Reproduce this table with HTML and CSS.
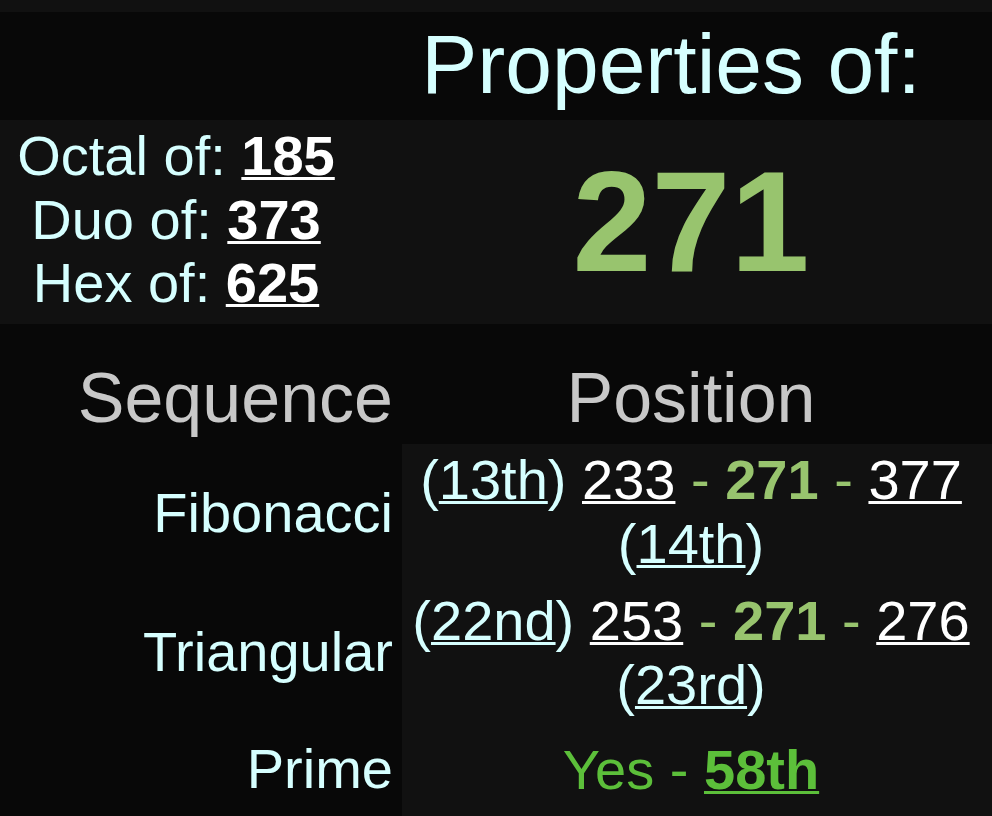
FILE: index.html
```html
<!DOCTYPE html>
<html lang="en">
<head>
<meta charset="utf-8">
<title>Properties of 271</title>
<link rel="stylesheet" href="styles.css">
</head>
<body>
<main class="props">
  <div class="strip"></div>
  <header class="title-row">
    <h1 class="title">Properties of:</h1>
  </header>
  <section class="number-row">
    <div class="bases">
      <div class="base-line">Octal of: <a class="base-num" href="#">185</a></div>
      <div class="base-line">Duo of: <a class="base-num" href="#">373</a></div>
      <div class="base-line">Hex of: <a class="base-num" href="#">625</a></div>
    </div>
    <div class="number">271</div>
  </section>
  <section class="seq">
    <div class="seq-head seq-head-label">Sequence</div>
    <div class="seq-head seq-head-value">Position</div>

    <div class="seq-label seq-label-fib">Fibonacci</div>
    <div class="seq-value seq-value-fib">
      <div class="seq-line">(<a class="pos-link" href="#">13th</a>) <a class="num-link" href="#">233</a> <span class="dash">-</span> <b class="self">271</b> <span class="dash">-</span> <a class="num-link" href="#">377</a></div>
      <div class="seq-line">(<a class="pos-link" href="#">14th</a>)</div>
    </div>

    <div class="seq-label seq-label-tri">Triangular</div>
    <div class="seq-value seq-value-tri">
      <div class="seq-line">(<a class="pos-link" href="#">22nd</a>) <a class="num-link" href="#">253</a> <span class="dash">-</span> <b class="self">271</b> <span class="dash">-</span> <a class="num-link" href="#">276</a></div>
      <div class="seq-line">(<a class="pos-link" href="#">23rd</a>)</div>
    </div>

    <div class="seq-label seq-label-prime">Prime</div>
    <div class="seq-value seq-value-prime">
      <div class="seq-line prime-line">Yes - <a class="prime-link" href="#">58th</a></div>
    </div>
  </section>
</main>
</body>
</html>
```
FILE: styles.css
```css
html, body {
  margin: 0;
  padding: 0;
  background: #080808;
  font-family: "Liberation Sans", Arial, Helvetica, sans-serif;
}

.props {
  width: 992px;
}

.strip {
  height: 12px;
  background: #111111;
}

.title-row {
  height: 108px;
  box-sizing: border-box;
  padding-left: 350px;
  text-align: center;
  background: #080808;
}

.title {
  margin: 0;
  font-size: 84px;
  font-weight: 400;
  line-height: 104px;
  color: #d6ffff;
}

.number-row {
  display: grid;
  grid-template-columns: 352px 1fr;
  height: 204px;
  background: #111111;
}

.bases {
  padding-top: 4px;
  text-align: center;
  font-size: 56px;
  line-height: 63.5px;
  color: #d6ffff;
  white-space: nowrap;
}

.base-num {
  color: #ffffff;
  font-weight: 700;
  text-decoration: underline;
  text-decoration-thickness: 3px;
}

.number {
  align-self: center;
  padding: 0 12px 0 50px;
  text-align: center;
  font-size: 142px;
  line-height: 142px;
  font-weight: 700;
  color: #98c46e;
}

.seq {
  display: grid;
  grid-template-columns: 402px 1fr;
  font-size: 56px;
  line-height: 64px;
}

.seq-head {
  padding: 34px 0 6px;
  font-size: 70px;
  line-height: 80px;
  color: #c8c8c8;
}

.seq-head-label {
  text-align: right;
  padding-right: 9px;
}

.seq-head-value {
  text-align: center;
  padding-left: 4px;
  padding-right: 16px;
}

.seq-label {
  text-align: right;
  padding-right: 9px;
  color: #d6ffff;
}

.seq-label-fib { padding-top: 37px; }
.seq-label-tri { padding-top: 38px; }
.seq-label-prime { padding-top: 14px; }

.seq-value {
  background: #111111;
  text-align: center;
  padding-left: 4px;
  padding-right: 16px;
  color: #d6ffff;
}

.seq-value-fib { padding-top: 4px; padding-bottom: 6px; }
.seq-value-tri { padding-top: 7px; padding-bottom: 6px; }
.seq-value-prime { padding-top: 15px; padding-bottom: 40px; }

.seq-line {
  white-space: nowrap;
}

.pos-link {
  color: #d6ffff;
  text-decoration: underline;
  text-decoration-thickness: 3px;
}

.num-link {
  color: #ffffff;
  text-decoration: underline;
  text-decoration-thickness: 3px;
}

.dash {
  color: #98c46e;
}

.self {
  color: #98c46e;
  font-weight: 700;
}

.prime-line {
  color: #5cbf3a;
}

.prime-link {
  color: #5cbf3a;
  font-weight: 700;
  text-decoration: underline;
  text-decoration-thickness: 3px;
}
```
